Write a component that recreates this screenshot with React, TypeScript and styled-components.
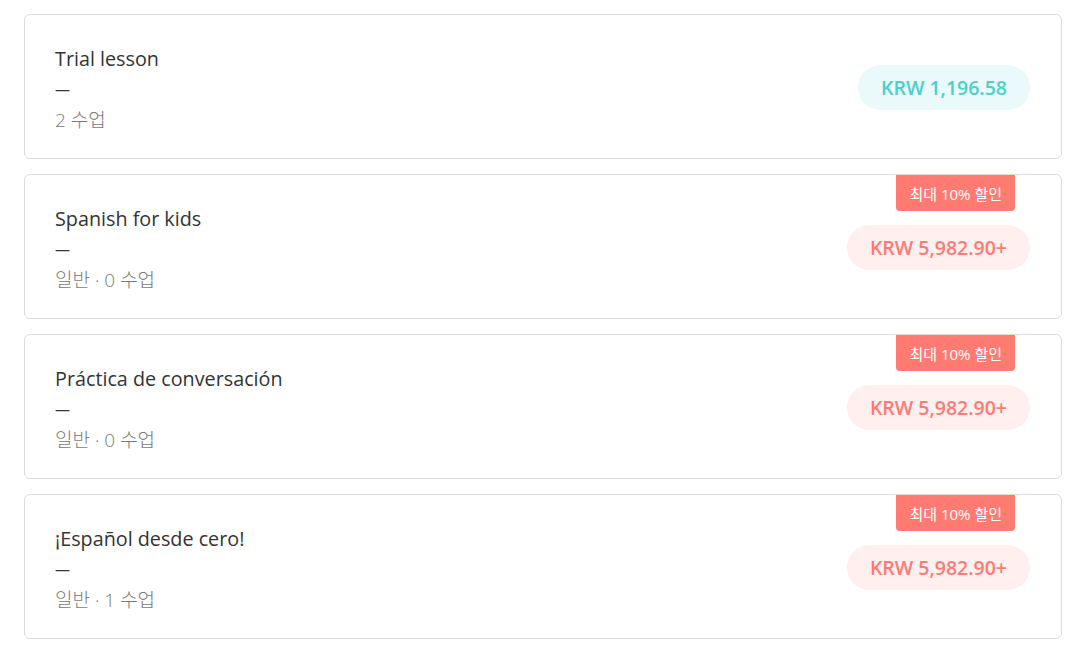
import styled, { createGlobalStyle } from 'styled-components';

const GlobalStyle = createGlobalStyle`
  html, body {
    margin: 0;
    padding: 0;
    background: #ffffff;
  }
  body {
    font-family: 'Open Sans', 'Noto Sans CJK KR', sans-serif;
  }
`;

type Tone = 'teal' | 'coral';

interface Lesson {
  title: string;
  meta: string;
  price: string;
  tone: Tone;
  discount?: string;
}

const lessons: Lesson[] = [
  { title: 'Trial lesson', meta: '2 수업', price: 'KRW 1,196.58', tone: 'teal' },
  {
    title: 'Spanish for kids',
    meta: '일반 · 0 수업',
    price: 'KRW 5,982.90+',
    tone: 'coral',
    discount: '최대 10% 할인',
  },
  {
    title: 'Práctica de conversación',
    meta: '일반 · 0 수업',
    price: 'KRW 5,982.90+',
    tone: 'coral',
    discount: '최대 10% 할인',
  },
  {
    title: '¡Español desde cero!',
    meta: '일반 · 1 수업',
    price: 'KRW 5,982.90+',
    tone: 'coral',
    discount: '최대 10% 할인',
  },
];

const palette = {
  teal: { bg: '#eaf9f9', fg: '#4ccfcd' },
  coral: { bg: '#fff0ef', fg: '#ff7a72' },
};

const List = styled.div`
  display: flex;
  flex-direction: column;
  gap: 15px;
  padding: 14px 27px 14px 24px;
`;

const Card = styled.div`
  position: relative;
  display: flex;
  align-items: center;
  justify-content: space-between;
  height: 145px;
  box-sizing: border-box;
  padding: 0 31px 0 30px;
  border: 1px solid #dcdcdc;
  border-radius: 6px;
  background: #fff;
`;

const Info = styled.div`
  display: flex;
  flex-direction: column;
  padding-top: 6px;
`;

const Title = styled.div`
  font-size: 19.75px;
  line-height: 31px;
  color: #333333;
`;

const Dash = styled.div`
  font-size: 15px;
  line-height: 31px;
  color: #333333;
`;

const Meta = styled.div`
  font-size: 19px;
  font-weight: 300;
  line-height: 31px;
  color: #7a7a7a;
`;

const Price = styled.div<{ $tone: Tone }>`
  display: flex;
  align-items: center;
  height: 45px;
  margin-top: 2px;
  padding: 0 23px;
  border-radius: 23px;
  font-size: 19.5px;
  font-weight: 600;
  background: ${(p) => palette[p.$tone].bg};
  color: ${(p) => palette[p.$tone].fg};
`;

const Badge = styled.div`
  position: absolute;
  top: 0;
  right: 46px;
  display: flex;
  align-items: center;
  height: 36px;
  padding: 0 13px;
  border-radius: 0 0 4px 4px;
  background: #ff7b72;
  color: #ffffff;
  font-size: 15px;
`;

export default function App() {
  return (
    <>
      <GlobalStyle />
      <List>
        {lessons.map((lesson) => (
          <Card key={lesson.title}>
            {lesson.discount ? <Badge>{lesson.discount}</Badge> : null}
            <Info>
              <Title>{lesson.title}</Title>
              <Dash>—</Dash>
              <Meta>{lesson.meta}</Meta>
            </Info>
            <Price $tone={lesson.tone}>{lesson.price}</Price>
          </Card>
        ))}
      </List>
    </>
  );
}
